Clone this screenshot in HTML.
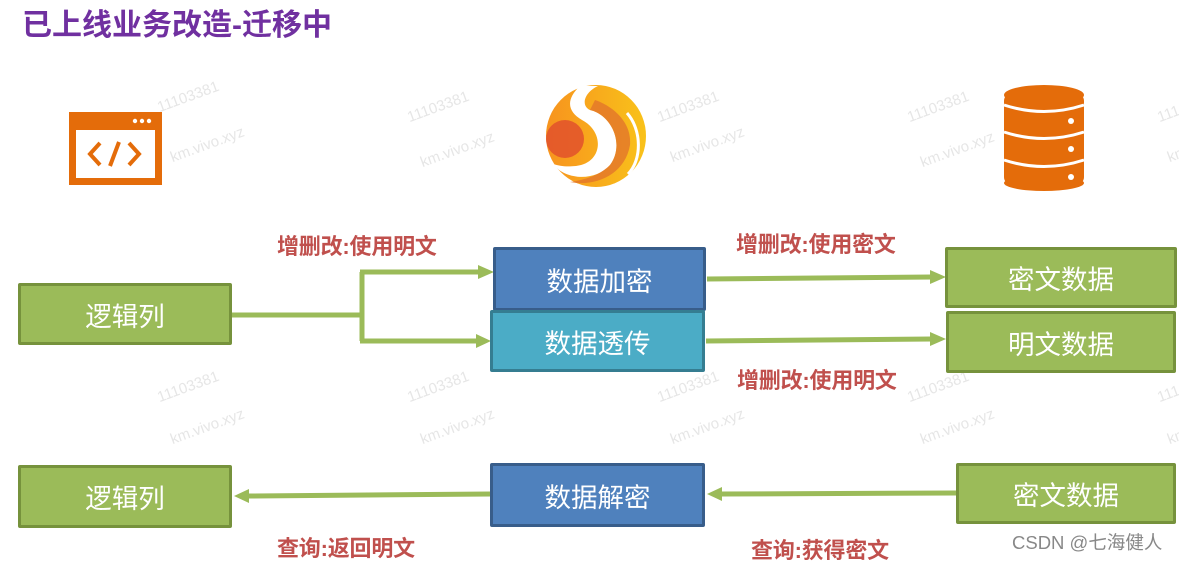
<!DOCTYPE html>
<html><head><meta charset="utf-8"><style>
body{margin:0;width:1179px;height:561px;background:#fff;position:relative;overflow:hidden;font-family:"Liberation Sans","Noto Sans CJK SC",sans-serif}
.t{position:absolute;left:22px;top:0px;font-size:30px;font-weight:bold;color:#7030a0}
.b{position:absolute;box-sizing:border-box;border:3px solid;border-radius:2px;color:#fff;font-size:26.5px;display:flex;align-items:center;justify-content:center}
.g{background:#9bbb59;border-color:#76923c}
.bl{background:#4f81bd;border-color:#385d8a}
.tl{background:#4bacc6;border-color:#357d91}
.l{position:absolute;font-size:22px;font-weight:bold;color:#c0504d;white-space:nowrap;letter-spacing:-0.2px}
.w{position:absolute;color:#e6e6e6;font-size:15px;transform:rotate(-20deg);transform-origin:left top;white-space:nowrap}
svg{position:absolute;left:0;top:0}
</style></head><body>
<div class="t">已上线业务改造-迁移中</div>

<div class="w" style="left:155px;top:100px">11103381</div><div class="w" style="left:168px;top:150px">km.vivo.xyz</div>
<div class="w" style="left:405px;top:110px">11103381</div><div class="w" style="left:418px;top:155px">km.vivo.xyz</div>
<div class="w" style="left:655px;top:110px">11103381</div><div class="w" style="left:668px;top:150px">km.vivo.xyz</div>
<div class="w" style="left:905px;top:110px">11103381</div><div class="w" style="left:918px;top:155px">km.vivo.xyz</div>
<div class="w" style="left:1155px;top:110px">11103381</div><div class="w" style="left:1165px;top:150px">km.vivo.xyz</div>
<div class="w" style="left:155px;top:390px">11103381</div><div class="w" style="left:168px;top:432px">km.vivo.xyz</div>
<div class="w" style="left:405px;top:390px">11103381</div><div class="w" style="left:418px;top:432px">km.vivo.xyz</div>
<div class="w" style="left:655px;top:390px">11103381</div><div class="w" style="left:668px;top:432px">km.vivo.xyz</div>
<div class="w" style="left:905px;top:390px">11103381</div><div class="w" style="left:918px;top:432px">km.vivo.xyz</div>
<div class="w" style="left:1155px;top:390px">11103381</div><div class="w" style="left:1165px;top:432px">km.vivo.xyz</div>

<svg width="1179" height="561">
<defs>
<linearGradient id="sg" x1="0" x2="1"><stop offset="0" stop-color="#f7931e"/><stop offset="1" stop-color="#f9c21a"/></linearGradient>
</defs>
<rect x="69" y="112" width="93" height="73" fill="#e46c0a"/>
<rect x="76" y="130" width="79" height="48" fill="#fff"/>
<circle cx="135" cy="121" r="2.2" fill="#fff"/><circle cx="142" cy="121" r="2.2" fill="#fff"/><circle cx="149" cy="121" r="2.2" fill="#fff"/>
<path d="M100 143 L90 154 L100 165 M129 143 L139 154 L129 165 M119 142 L110 166" stroke="#e46c0a" stroke-width="4" fill="none"/>
<ellipse cx="596" cy="136" rx="50" ry="51" fill="url(#sg)"/>
<ellipse cx="565" cy="139" rx="19" ry="19" fill="#e2512b" opacity="0.85"/>
<path d="M580 86 C565 100 568 112 582 120 C605 132 603 163 576 166 C565 167 560 166 553 164 C565 180 595 182 610 165 C625 145 612 115 590 110 C580 105 585 92 598 86 Z" fill="#fff"/>
<path d="M590 110 C612 115 625 145 610 165 C600 175 585 180 570 182 C595 187 625 175 630 145 C632 120 610 105 595 100 Z" fill="#e2762a" opacity="0.8"/>
<path d="M627 113 C642 130 642 160 628 174" stroke="#fff" stroke-width="3" fill="none"/>
<rect x="1004" y="93" width="80" height="92" rx="8" fill="#e46c0a"/>
<ellipse cx="1044" cy="95" rx="40" ry="10" fill="#e46c0a"/>
<ellipse cx="1044" cy="183" rx="40" ry="8" fill="#e46c0a"/>
<path d="M1004 105 Q1044 118 1084 105 M1004 132 Q1044 145 1084 132 M1004 160 Q1044 173 1084 160" stroke="#fff" stroke-width="3" fill="none"/>
<circle cx="1071" cy="121" r="3" fill="#fff"/><circle cx="1071" cy="149" r="3" fill="#fff"/><circle cx="1071" cy="177" r="3" fill="#fff"/>
<g stroke="#9bbb59" stroke-width="5" fill="none">
<path d="M232 315 H362 M362 272 V341 M360 272 H480 M360 341 H478"/>
<path d="M707 279 L932 277 M706 341 L932 339"/>
<path d="M956 493 L720 494 M490 494 L248 496"/>
</g>
<g fill="#9bbb59">
<path d="M478 265 L494 272 L478 279 Z"/>
<path d="M476 334 L491 341 L476 348 Z"/>
<path d="M930 270 L946 277 L930 284 Z"/>
<path d="M930 332 L946 339 L930 346 Z"/>
<path d="M722 487 L707 494 L722 501 Z"/>
<path d="M249 489 L234 496 L249 503 Z"/>
</g>
</svg>

<div class="b g" style="left:18px;top:283px;width:214px;height:62px">逻辑列</div>
<div class="b bl" style="left:493px;top:247px;width:213px;height:64px">数据加密</div>
<div class="b tl" style="left:490px;top:310px;width:215px;height:62px">数据透传</div>
<div class="b g" style="left:945px;top:247px;width:232px;height:61px">密文数据</div>
<div class="b g" style="left:946px;top:311px;width:230px;height:62px">明文数据</div>
<div class="b g" style="left:18px;top:465px;width:214px;height:63px">逻辑列</div>
<div class="b bl" style="left:490px;top:463px;width:215px;height:64px">数据解密</div>
<div class="b g" style="left:956px;top:463px;width:220px;height:61px">密文数据</div>

<div class="l" style="left:277px;top:229px">增删改:使用明文</div>
<div class="l" style="left:736px;top:227px">增删改:使用密文</div>
<div class="l" style="left:737px;top:363px">增删改:使用明文</div>
<div class="l" style="left:277px;top:531px">查询:返回明文</div>
<div class="l" style="left:751px;top:533px">查询:获得密文</div>
<div style="position:absolute;left:1012px;top:529px;font-size:18.5px;color:#888">CSDN @七海健人</div>
</body></html>
